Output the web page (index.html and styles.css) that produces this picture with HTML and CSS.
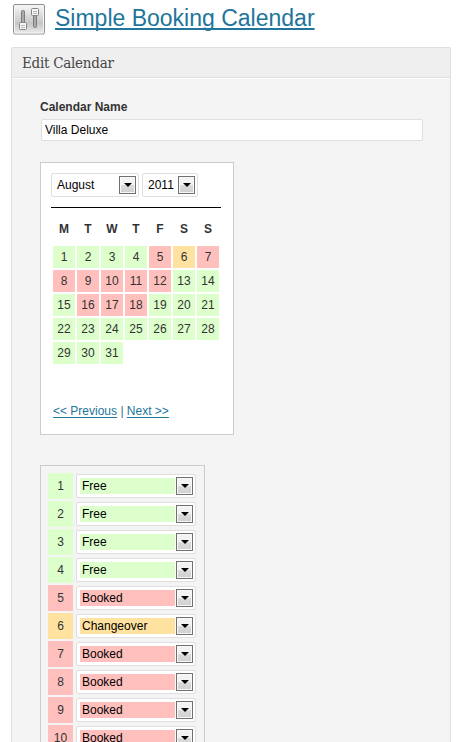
FILE: index.html
```
<!DOCTYPE html>
<html lang="en">
<head>
<meta charset="utf-8">
<title>Simple Booking Calendar</title>
<link rel="stylesheet" href="styles.css">
</head>
<body>
<header class="page-head">
  <svg class="logo" width="32" height="31" viewBox="0 0 32 31">
    <defs><linearGradient id="g" x1="0" y1="0" x2="0" y2="1"><stop offset="0" stop-color="#f8f8f8"/><stop offset=".65" stop-color="#c6c6c6"/><stop offset="1" stop-color="#eee"/></linearGradient></defs>
    <rect x=".5" y=".5" width="31" height="29.5" rx="1.500" fill="url(#g)" stroke="#909090"/>
    <rect x="1.500" y="1.500" width="29" height="27.500" rx="1" fill="none" stroke="#f4f4f4"/>
    <rect x="8.500" y="6.500" width="3" height="14" rx="1" fill="#aaa" stroke="#7c7c7c"/>
    <rect x="6.500" y="18.500" width="7" height="7" rx="1" fill="#f6f6f6" stroke="#858585"/>
    <path d="M8 21.500h4M8 23.500h4" stroke="#bbb"/>
    <rect x="20.500" y="9.500" width="3" height="14" rx="1" fill="#aaa" stroke="#7c7c7c"/>
    <rect x="18.500" y="4.500" width="7" height="7" rx="1" fill="#f6f6f6" stroke="#858585"/>
    <path d="M20 7.500h4M20 9.500h4" stroke="#bbb"/>
  </svg>
  <h1><a href="#">Simple Booking Calendar</a></h1>
</header>
<main class="panel">
  <h2>Edit Calendar</h2>
  <div class="content">
    <label class="name-label" for="name">Calendar Name</label>
    <input id="name" class="name-input" type="text" value="Villa Deluxe">
    <section class="calendar">
      <div class="pickers">
        <div class="select month"><span class="value">August</span><i class="arrow"></i></div>
        <div class="select year"><span class="value">2011</span><i class="arrow"></i></div>
      </div>
      <div class="weekdays"><b>M</b><b>T</b><b>W</b><b>T</b><b>F</b><b>S</b><b>S</b></div>
      <div class="days" id="days"></div>
      <div class="nav"><a href="#">&lt;&lt; Previous</a> | <a href="#">Next &gt;&gt;</a></div>
    </section>
    <section class="editor" id="editor"></section>
  </div>
</main>
<script src="script.js"></script>
</body>
</html>
```
FILE: styles.css
```
* { box-sizing: border-box; }
html { background: #fff; }
body {
  margin: 0;
  height: 742px;
  overflow: hidden;
  font: 12px/16px "Liberation Sans", Arial, sans-serif;
  color: #333;
}
a { color: #21759b; }
.page-head {
  display: flex;
  height: 47px;
  padding: 4px 0 0 13px;
}
.logo { flex: none; }
h1 {
  margin: 0 0 0 10px;
  font-size: 23px;
  line-height: 28px;
  font-weight: normal;
  white-space: nowrap;
}
h1 a {
  text-decoration-thickness: 2px;
  text-underline-offset: 2px;
  text-decoration-skip-ink: none;
}
.panel {
  width: 440px;
  height: 695px;
  margin-left: 11px;
  border: 1px solid #dfdfdf;
  border-bottom: 0;
  border-radius: 2px 2px 0 0;
  background: #f4f4f4;
}
h2 {
  margin: 0;
  height: 30px;
  padding-left: 10px;
  border-bottom: 1px solid #dfdfdf;
  box-shadow: 0 1px 0 #fff;
  background: #efefef;
  color: #464646;
  font: 15px/30px "DejaVu Serif Condensed", "DejaVu Serif", serif;
  letter-spacing: -0.26px;
}
.content { padding: 21px 28px 0; }
.name-label {
  display: block;
  font-weight: bold;
}
.name-input {
  display: block;
  width: 382px;
  height: 22px;
  margin: 4px 0 0 1px;
  padding: 1px 3px;
  border: 1px solid #dfdfdf;
  border-radius: 2px;
  background: #fff;
  color: #000;
  font: inherit;
}
.calendar {
  width: 194px;
  height: 273px;
  margin-top: 21px;
  padding: 10px;
  border: 1px solid #ccc;
  background: #fff;
}
.pickers {
  display: flex;
  gap: 3px;
  width: 170px;
  height: 35px;
  border-bottom: 1px solid #000;
}
.select {
  display: flex;
  align-items: center;
  height: 24px;
  padding: 0 2px 0 3px;
  border: 1px solid #dfdfdf;
  border-radius: 2px;
  background: #fff;
  color: #000;
}
.month { width: 88px; }
.year { width: 56px; }
.value {
  flex: 1;
  height: 16px;
  margin-right: 1px;
  padding-left: 2px;
  line-height: 16px;
}
.arrow {
  display: flex;
  align-items: center;
  justify-content: center;
  flex: none;
  width: 17px;
  height: 18px;
  border: 1px solid #707070;
  background: linear-gradient(#f3f3f3 0 50%, #dcdcdc 50%, #cfcfcf);
  box-shadow: inset 0 0 0 1px #f8f8f8;
}
.arrow::after {
  content: "";
  border: 4px solid transparent;
  border-top-color: #000;
  border-bottom: 0;
}
.weekdays, .days {
  display: grid;
  grid-template-columns: repeat(7, 22px);
  gap: 2px;
  padding-left: 2px;
  text-align: center;
}
.weekdays { margin-top: 13px; line-height: 16px; }
.days {
  margin-top: 9px;
  height: 150px;
  grid-auto-rows: 22px;
  line-height: 22px;
}
.nav { margin-top: 7px; padding-left: 2px; color: #21759b; }
.nav a { text-underline-offset: 2px; text-decoration-thickness: 1px; text-decoration-skip-ink: none; }
.free { background: #dfc; }
.booked { background: #ffc0bd; }
.changeover { background: #ffe29f; }
.editor {
  width: 165px;
  height: 320px;
  margin-top: 30px;
  padding: 7px;
  border: 1px solid #ccc;
}
.row {
  display: flex;
  align-items: center;
  gap: 3px;
  height: 26px;
  margin-bottom: 2px;
}
.number {
  width: 25px;
  line-height: 26px;
  text-align: center;
}
.row .select { width: 120px; }
```
FILE: script.js
```
const booked = [5, 7, 8, 9, 10, 11, 12, 16, 17, 18];
const visibleRows = 10;
const days = document.getElementById("days");
const editor = document.getElementById("editor");

for (let day = 1; day <= 31; day++) {
  const status = day === 6 ? "Changeover" : booked.includes(day) ? "Booked" : "Free";
  const cls = status.toLowerCase();
  days.insertAdjacentHTML("beforeend", `<span class="${cls}">${day}</span>`);
  if (day <= visibleRows) {
    editor.insertAdjacentHTML("beforeend",
      `<div class="row"><span class="number ${cls}">${day}</span>
       <div class="select"><span class="value ${cls}">${status}</span><i class="arrow"></i></div></div>`);
  }
}
```
